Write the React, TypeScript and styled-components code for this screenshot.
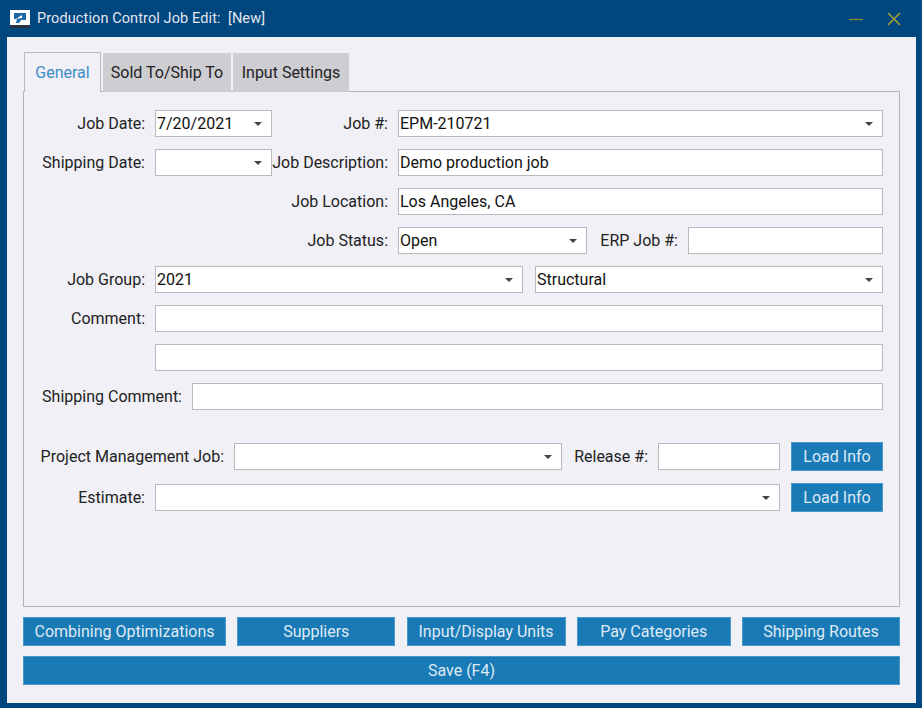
import React from "react";
import styled, { createGlobalStyle } from "styled-components";

const Global = createGlobalStyle`
  html, body { margin: 0; padding: 0; background: #fff; }
  body { font-family: Roboto, "Liberation Sans", sans-serif; overflow: hidden; }
`;

const Win = styled.div`
  width: 922px; height: 708px; box-sizing: border-box; background: #00467f;
  padding: 0 6px 5px 7px; display: flex; flex-direction: column;
`;
const TitleBar = styled.div`
  height: 37px; flex: none; display: flex; align-items: center; color: #e3e6ee; font-size: 14.5px;
`;
const AppIcon = styled.svg`
  width: 20px; height: 18px; margin: 0 7px 0 3px; flex: none;
`;
const TitleText = styled.span`
  flex: 1; white-space: pre; letter-spacing: 0.1px;
`;
const WinBtn = styled.svg`
  width: 16px; height: 16px; flex: none; margin-left: 22px;
  &:last-child { margin-right: 14px; }
`;
const Body = styled.div`
  flex: 1; background: #f0f0f6; padding: 15px 16px 16px; display: flex; flex-direction: column; box-sizing: border-box;
`;
const Tabs = styled.div`
  display: flex; height: 40px; flex: none; padding-left: 1px; margin-bottom: -1px; position: relative; z-index: 1; align-items: flex-end;
`;
const Tab = styled.div<{ $active?: boolean }>`
  box-sizing: border-box; display: flex; align-items: center; justify-content: center; font-size: 16px;
  width: ${(p) => p.$w}px;
`;
const TabItem = styled.div<{ $active?: boolean; $w: number }>`
  box-sizing: border-box; display: flex; align-items: center; justify-content: center; font-size: 16px;
  width: ${(p) => p.$w}px; margin-right: 2px;
  height: ${(p) => (p.$active ? 40 : 39)}px;
  background: ${(p) => (p.$active ? "#f0f0f6" : "#cdcdd2")};
  color: ${(p) => (p.$active ? "#3c8dc5" : "#222")};
  border: ${(p) => (p.$active ? "1px solid #b9b9bd" : "none")};
  border-bottom: none;
`;
const Panel = styled.div`
  height: 516px; flex: none; box-sizing: border-box; border: 1px solid #b4b4b8; padding: 18px 16px 0;
  display: flex; flex-direction: column; gap: 12px;
`;
const Row = styled.div<{ $mt?: number }>`
  display: flex; align-items: center; height: 27px; flex: none; gap: 0;
  margin-top: ${(p) => p.$mt ?? 0}px;
`;
const Label = styled.label<{ $w: number; $ml?: number }>`
  width: ${(p) => p.$w}px; flex: none; box-sizing: border-box; text-align: right; padding-right: 10px;
  margin-left: ${(p) => p.$ml ?? 0}px; font-size: 16px; color: #222; white-space: nowrap;
`;
const Field = styled.div<{ $w?: number; $ml?: number }>`
  box-sizing: border-box; height: 27px; background: #fff; border: 1px solid #b9b9bd; display: flex; align-items: center;
  font-size: 16px; color: #111; padding: 0 0 0 1px; white-space: nowrap; position: relative;
  ${(p) => (p.$w ? `width: ${p.$w}px; flex: none;` : "flex: 1;")}
  margin-left: ${(p) => p.$ml ?? 0}px;
`;
const Arrow = styled.span`
  margin-left: auto; margin-right: 9px; width: 0; height: 0; border-left: 4px solid transparent;
  border-right: 4px solid transparent; border-top: 4px solid #444;
`;
const Button = styled.button<{ $w?: number; $ml?: number; $h?: number }>`
  box-sizing: border-box; height: ${(p) => p.$h ?? 29}px; background: #1a7ab5; border: 1px solid #4a9ac9; color: #dfeaf4;
  font: 16px Roboto, "Liberation Sans", sans-serif; padding: 0;
  ${(p) => (p.$w ? `width: ${p.$w}px; flex: none;` : "flex: 1;")}
  margin-left: ${(p) => p.$ml ?? 0}px;
`;
const Actions = styled.div`
  display: flex; justify-content: space-between; margin-top: 10px; flex: none;
`;
const SaveBar = styled.div`
  display: flex; margin-top: 10px; flex: none;
`;

const Select = ({ w, ml, children }: { w?: number; ml?: number; children?: React.ReactNode }) => (
  <Field $w={w} $ml={ml}>{children}<Arrow /></Field>
);

export default function App() {
  return (
    <Win>
      <Global />
      <TitleBar>
        <AppIcon viewBox="0 0 20 18">
          <rect x="0" y="0" width="20" height="15" fill="#fff" />
          <rect x="0" y="15" width="20" height="3" fill="#2a3140" />
          <path d="M4 3h12v7h-5l-2 3H6l1-4H4z" fill="#1b6aa5" />
          <path d="M6 9l6-4v3z" fill="#fff" />
        </AppIcon>
        <TitleText>Production Control Job Edit:  [New]</TitleText>
        <WinBtn viewBox="0 0 16 16"><path d="M1 8.5h14" stroke="#8c8a3a" strokeWidth="1.3" /></WinBtn>
        <WinBtn viewBox="0 0 16 16"><path d="M2 2l12 12M14 2L2 14" stroke="#a79c34" strokeWidth="1.6" /></WinBtn>
      </TitleBar>
      <Body>
        <Tabs>
          <TabItem $active $w={77}>General</TabItem>
          <TabItem $w={128}>Sold To/Ship To</TabItem>
          <TabItem $w={116}>Input Settings</TabItem>
        </Tabs>
        <Panel>
          <Row>
            <Label $w={115}>Job Date:</Label>
            <Select w={117}>7/20/2021</Select>
            <Label $w={126}>Job #:</Label>
            <Select>EPM-210721</Select>
          </Row>
          <Row>
            <Label $w={115}>Shipping Date:</Label>
            <Select w={117} />
            <Label $w={126}>Job Description:</Label>
            <Field>Demo production job</Field>
          </Row>
          <Row>
            <Label $w={358}>Job Location:</Label>
            <Field>Los Angeles, CA</Field>
          </Row>
          <Row>
            <Label $w={358}>Job Status:</Label>
            <Select w={189}>Open</Select>
            <Label $w={101}>ERP Job #:</Label>
            <Field />
          </Row>
          <Row>
            <Label $w={115}>Job Group:</Label>
            <Select w={368}>2021</Select>
            <Select ml={12}>Structural</Select>
          </Row>
          <Row>
            <Label $w={115}>Comment:</Label>
            <Field />
          </Row>
          <Row>
            <Label $w={115} />
            <Field />
          </Row>
          <Row>
            <Label $w={152}>Shipping Comment:</Label>
            <Field />
          </Row>
          <Row $mt={21}>
            <Label $w={194}>Project Management Job:</Label>
            <Select w={328} />
            <Label $w={96}>Release #:</Label>
            <Field $w={122} />
            <Button $w={92} $ml={11}>Load Info</Button>
          </Row>
          <Row $mt={2}>
            <Label $w={115}>Estimate:</Label>
            <Select w={625} />
            <Button $w={92} $ml={11}>Load Info</Button>
          </Row>
        </Panel>
        <Actions>
          <Button $w={203}>Combining Optimizations</Button>
          <Button $w={158}>Suppliers</Button>
          <Button $w={159}>Input/Display Units</Button>
          <Button $w={154}>Pay Categories</Button>
          <Button $w={158}>Shipping Routes</Button>
        </Actions>
        <SaveBar>
          <Button>Save (F4)</Button>
        </SaveBar>
      </Body>
    </Win>
  );
}
